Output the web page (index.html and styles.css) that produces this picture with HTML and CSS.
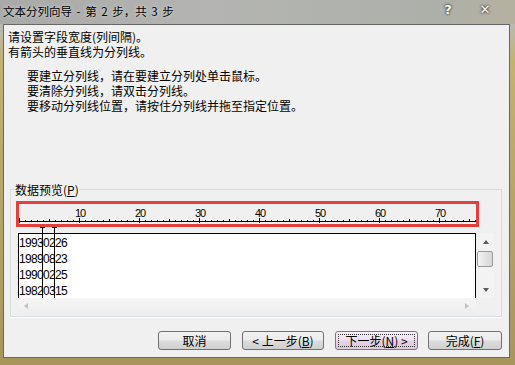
FILE: index.html
```html
<!DOCTYPE html>
<html lang="zh-CN">
<head>
    <meta charset="UTF-8">
    <title>文本分列向导</title>
    <link rel="stylesheet" href="styles.css">
</head>
<body>
    <div class="titlebar">
        <span class="title">文本分列向导 - 第 2 步，共 3 步</span>
        <span class="caption-btn help-btn">?</span>
        <span class="caption-btn close-btn">✕</span>
    </div>
    <div class="client">
        <div class="intro">
            <p>请设置字段宽度(列间隔)。</p>
            <p>有箭头的垂直线为分列线。</p>
        </div>
        <div class="hints">
            <p>要建立分列线，请在要建立分列处单击鼠标。</p>
            <p>要清除分列线，请双击分列线。</p>
            <p>要移动分列线位置，请按住分列线并拖至指定位置。</p>
        </div>
        <fieldset class="preview">
            <legend>数据预览(<u>P</u>)</legend>
            <div class="preview-area">
                <div class="ruler">
                    <div class="ruler-nums">
                        <span>10</span><span>20</span><span>30</span><span>40</span>
                        <span>50</span><span>60</span><span>70</span>
                    </div>
                    <div class="ruler-ticks"></div>
                </div>
                <div class="data-row">
                    <div class="data-col">
                        <div class="data">
                            <div>19930226</div>
                            <div>19890823</div>
                            <div>19900225</div>
                            <div>19820315</div>
                        </div>
                        <div class="hscroll">
                            <span class="arrow arrow-left"></span>
                            <span class="arrow arrow-right"></span>
                        </div>
                    </div>
                    <div class="vscroll">
                        <div class="sb-btn"><span class="arrow arrow-up"></span></div>
                        <div class="thumb"></div>
                        <div class="sb-btn sb-bottom"><span class="arrow arrow-down"></span></div>
                    </div>
                </div>
                <div class="break break-a"></div>
                <div class="break break-b"></div>
            </div>
        </fieldset>
        <div class="buttons">
            <button class="btn btn-cancel">取消</button>
            <button class="btn btn-back">&lt; 上一步(<u>B</u>)</button>
            <button class="btn btn-next default">下一步(<u>N</u>) &gt;</button>
            <button class="btn btn-finish">完成(<u>F</u>)</button>
        </div>
    </div>
</body>
</html>
```

FILE: styles.css
```css
body {
    margin: 0;
    width: 515px;
    height: 365px;
    overflow: hidden;
    font-family: "Noto Sans CJK SC", sans-serif;
    font-size: 12px;
    color: #000;
    background: linear-gradient(to bottom, #b2b3b0 0, #b9b9b3 24px, #c2b274 60px, #a8955c 100%);
}

p {
    margin: 0;
}

/* window caption */
.titlebar {
    height: 24px;
    display: flex;
    align-items: center;
    background: linear-gradient(to right, #a9aaa8, #b4b5b2 40%, #adb0a9 85%, #b5b1a0);
}
.title {
    padding-left: 3px;
    padding-bottom: 2px;
    font-size: 11.5px;
    word-spacing: 2px;
    text-shadow: 0 0 4px rgba(255, 255, 255, 0.7);
}
.caption-btn {
    width: 20px;
    text-align: center;
    color: #f6f6f6;
    font-family: "DejaVu Sans", sans-serif;
    font-weight: bold;
    font-size: 13px;
    padding-bottom: 6px;
    text-shadow: 0 0 2px #333, 0 0 3px #444;
}
.help-btn {
    margin-left: auto;
}
.close-btn {
    margin-left: 17px;
    margin-right: 20px;
}

/* dialog body */
.client {
    margin: 0 5px 0 3px;
    height: 332px;
    border: 1px solid #676767;
    background: #f0f0f0;
}
.intro {
    padding: 4px 0 0 4px;
    line-height: 15px;
}
.hints {
    margin: 9px 0 0 23px;
    line-height: 15px;
}

.preview {
    margin: 69px 7px 0 6px;
    padding: 4px 0 2px 5px;
    border: 1px solid #d8dde2;
    box-shadow: 0 1px 0 #fff;
}
.preview legend {
    padding: 0;
    margin-left: -1px;
    line-height: 15px;
}
.preview-area {
    position: relative;
}

.ruler {
    width: 457px;
    height: 20px;
    border: 3px solid #e3403d;
    background: #f0f0f0;
}
.ruler-nums {
    display: flex;
    height: 10px;
    margin-top: 4px;
    padding-left: 31px;
    font-family: "Liberation Sans", Arial, sans-serif;
    font-size: 11px;
    letter-spacing: -1px;
    line-height: 10px;
}
.ruler-nums span {
    width: 60px;
    text-align: center;
}
.ruler-ticks {
    height: 5px;
    background:
        repeating-linear-gradient(to right, #000 0 1px, transparent 1px 60px) 0 0 / 100% 5px no-repeat,
        repeating-linear-gradient(to right, #000 0 1px, transparent 1px 30px) 0 1px / 100% 3px no-repeat,
        repeating-linear-gradient(to right, #000 0 1px, transparent 1px 6px) 0 2px / 100% 1px no-repeat,
        linear-gradient(#000, #000) 0 3px / 100% 1px no-repeat;
}

.data-row {
    display: flex;
    margin: 6px 0 0 2px;
}
.data-col {
    width: 458px;
}
.data {
    box-sizing: border-box;
    height: 65px;
    padding-top: 1px;
    border: 1px solid #000;
    border-bottom: none;
    background: #fff;
    font-family: "Liberation Sans", Arial, sans-serif;
    font-size: 12px;
    letter-spacing: -0.67px;
    line-height: 16px;
    overflow: hidden;
}
.hscroll {
    height: 16px;
    display: flex;
    align-items: center;
    justify-content: space-between;
    padding: 0 7px 0 6px;
    background: linear-gradient(to bottom, #f6f6f6, #eeeeee);
}

.vscroll {
    width: 17px;
    height: 65px;
    margin-left: 1px;
    display: flex;
    flex-direction: column;
    background: #f3f3f3;
}
.sb-btn {
    height: 17px;
    display: flex;
    align-items: center;
    justify-content: center;
}
.sb-bottom {
    margin-top: auto;
}
.thumb {
    height: 14px;
    margin: 1px 1px 0 0;
    border: 1px solid #9a9a9a;
    border-radius: 2px;
    background: linear-gradient(to right, #f4f4f4, #e4e4e4 50%, #d6d6d6);
}

.arrow {
    width: 0;
    height: 0;
    border-style: solid;
    border-color: transparent;
}
.arrow-up {
    border-width: 0 3.5px 4px 3.5px;
    border-bottom-color: #5a5a5a;
}
.arrow-down {
    border-width: 4px 3.5px 0 3.5px;
    border-top-color: #5a5a5a;
}
.arrow-left {
    border-width: 3.5px 4px 3.5px 0;
    border-right-color: #c2c2c2;
}
.arrow-right {
    border-width: 3.5px 0 3.5px 4px;
    border-left-color: #c2c2c2;
}

/* column break markers drawn over ruler edge and data */
.break {
    position: absolute;
    top: 26px;
    width: 1px;
    height: 71px;
    background: #000;
}
.break::before {
    content: "";
    position: absolute;
    top: 0;
    left: -2px;
    width: 5px;
    height: 1px;
    background: #000;
}
.break-a {
    left: 26px;
}
.break-b {
    left: 38px;
}

/* command buttons */
.buttons {
    display: flex;
    justify-content: flex-end;
    margin-top: 14px;
    padding-right: 7px;
}
.btn {
    height: 19px;
    margin-left: 11px;
    padding: 0;
    border: 1px solid #707070;
    border-radius: 3px;
    background: linear-gradient(to bottom, #f2f2f2 0%, #ebebeb 48%, #dddddd 52%, #cfcfcf 100%);
    font-family: "Noto Sans CJK SC", sans-serif;
    font-size: 12px;
    line-height: 17px;
    color: #000;
}
.btn-cancel {
    width: 73px;
}
.btn-back {
    width: 82px;
}
.btn-next {
    width: 83px;
}
.btn-finish {
    width: 74px;
    margin-left: 10px;
}
.btn.default {
    border-color: #8c6f8c;
    background: linear-gradient(to bottom, #f7eef7 0%, #efe0ef 48%, #e6d2e6 52%, #ddc8dd 100%);
    outline: 1px dotted #333;
    outline-offset: -4px;
}
```
